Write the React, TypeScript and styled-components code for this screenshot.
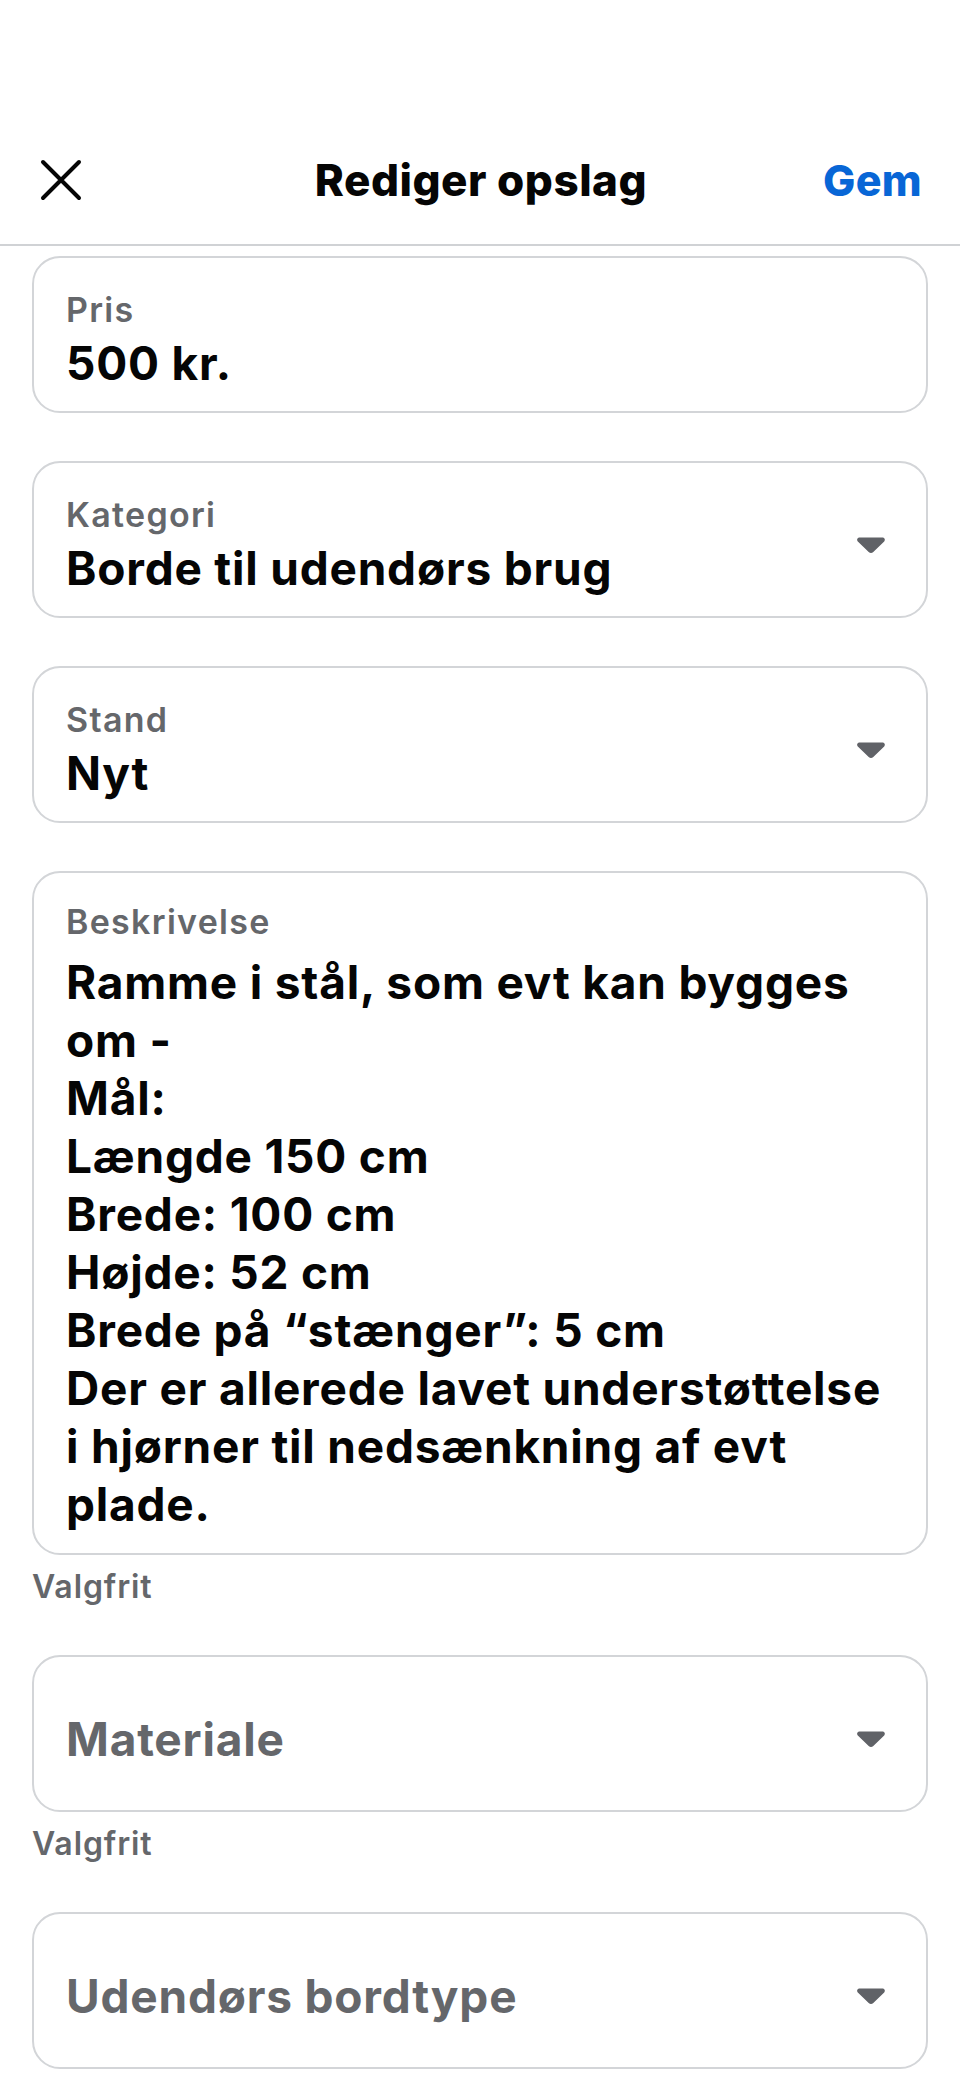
import React from 'react';
import styled, { createGlobalStyle } from 'styled-components';

const GlobalStyle = createGlobalStyle`
  html, body {
    margin: 0;
    padding: 0;
    background: #ffffff;
  }
  body {
    font-family: Inter, "Noto Sans", Roboto, sans-serif;
    color: #050505;
  }
`;

const Screen = styled.div`
  width: 960px;
  min-height: 2079px;
  background: #ffffff;
`;

const StatusSpace = styled.div`
  height: 116px;
`;

const NavBar = styled.div`
  height: 128px;
  display: grid;
  grid-template-columns: 1fr auto 1fr;
  align-items: center;
  padding: 0 38px 0 40px;
  border-bottom: 2px solid #d0d2d5;
`;

const CloseButton = styled.button`
  justify-self: start;
  width: 42px;
  height: 42px;
  padding: 0;
  border: none;
  background: none;
  display: flex;
  align-items: center;
  justify-content: center;
`;

const Title = styled.h1`
  margin: 0;
  font-size: 44px;
  font-weight: 800;
  letter-spacing: 0.5px;
  color: #050505;
`;

const SaveButton = styled.button`
  justify-self: end;
  border: none;
  background: none;
  padding: 0;
  font-family: inherit;
  font-size: 43px;
  font-weight: 800;
  letter-spacing: 0.3px;
  color: #0866d6;
`;

const Form = styled.div`
  display: flex;
  flex-direction: column;
  gap: 48px;
  padding: 10px 32px 0;
`;

const FieldGroup = styled.div`
  display: flex;
  flex-direction: column;
`;

const FieldBox = styled.div`
  box-sizing: border-box;
  min-height: 157px;
  border: 2px solid #d3d5d8;
  border-radius: 28px;
  padding: 30px 40px 20px 32px;
  display: flex;
  align-items: center;
  gap: 16px;
`;

const FieldText = styled.div`
  flex: 1;
  display: flex;
  flex-direction: column;
  gap: 8px;
`;

const Label = styled.div`
  font-size: 34px;
  line-height: 38px;
  font-weight: 600;
  letter-spacing: 1.3px;
  color: #65676b;
`;

const Value = styled.div<{ $placeholder?: boolean }>`
  font-size: 46px;
  line-height: 52px;
  font-weight: 700;
  letter-spacing: 0.8px;
  color: ${(p) => (p.$placeholder ? '#65676b' : '#050505')};
`;

const Description = styled.div`
  margin-top: 4px;
  font-size: 46px;
  line-height: 58px;
  font-weight: 700;
  letter-spacing: 0.8px;
  color: #050505;
  white-space: pre;
`;

const Helper = styled.div`
  margin-top: 12px;
  font-size: 32px;
  line-height: 40px;
  font-weight: 600;
  letter-spacing: 0.9px;
  color: #65676b;
`;

const Caret = () => (
  <svg width="30" height="18" viewBox="0 0 30 18" aria-hidden>
    <path
      d="M4 1.5 H26 C28.6 1.5 29.6 3.6 28.2 5.4 L17.3 15.9 C16 17.2 14 17.2 12.7 15.9 L1.8 5.4 C0.4 3.6 1.4 1.5 4 1.5 Z"
      fill="#606267"
    />
  </svg>
);

const CloseIcon = () => (
  <svg width="42" height="42" viewBox="0 0 42 42" aria-hidden>
    <path d="M3 3 L39 39 M39 3 L3 39" stroke="#050505" strokeWidth="4" strokeLinecap="round" />
  </svg>
);

type Field = {
  label?: string;
  value: string;
  select?: boolean;
  placeholder?: boolean;
  helper?: string;
};

const fields: Field[] = [
  { label: 'Pris', value: '500 kr.' },
  { label: 'Kategori', value: 'Borde til udendørs brug', select: true },
  { label: 'Stand', value: 'Nyt', select: true },
];

const optionalFields: Field[] = [
  { value: 'Materiale', select: true, placeholder: true, helper: 'Valgfrit' },
  { value: 'Udendørs bordtype', select: true, placeholder: true },
];

const description =
  'Ramme i stål, som evt kan bygges\nom -\nMål:\nLængde 150 cm\nBrede: 100 cm\nHøjde: 52 cm\nBrede på “stænger”: 5 cm\nDer er allerede lavet understøttelse\ni hjørner til nedsænkning af evt\nplade.';

const FieldRow: React.FC<{ field: Field }> = ({ field }) => (
  <FieldGroup>
    <FieldBox>
      <FieldText>
        {field.label && <Label>{field.label}</Label>}
        <Value $placeholder={field.placeholder}>{field.value}</Value>
      </FieldText>
      {field.select && <Caret />}
    </FieldBox>
    {field.helper && <Helper>{field.helper}</Helper>}
  </FieldGroup>
);

const App: React.FC = () => {
  return (
    <Screen>
      <GlobalStyle />
      <StatusSpace />
      <NavBar>
        <CloseButton>
          <CloseIcon />
        </CloseButton>
        <Title>Rediger opslag</Title>
        <SaveButton>Gem</SaveButton>
      </NavBar>
      <Form>
        {fields.map((f) => (
          <FieldRow key={f.value} field={f} />
        ))}
        <FieldGroup>
          <FieldBox>
            <FieldText>
              <Label>Beskrivelse</Label>
              <Description>{description}</Description>
            </FieldText>
          </FieldBox>
          <Helper>Valgfrit</Helper>
        </FieldGroup>
        {optionalFields.map((f) => (
          <FieldRow key={f.value} field={f} />
        ))}
      </Form>
    </Screen>
  );
};

export default App;
